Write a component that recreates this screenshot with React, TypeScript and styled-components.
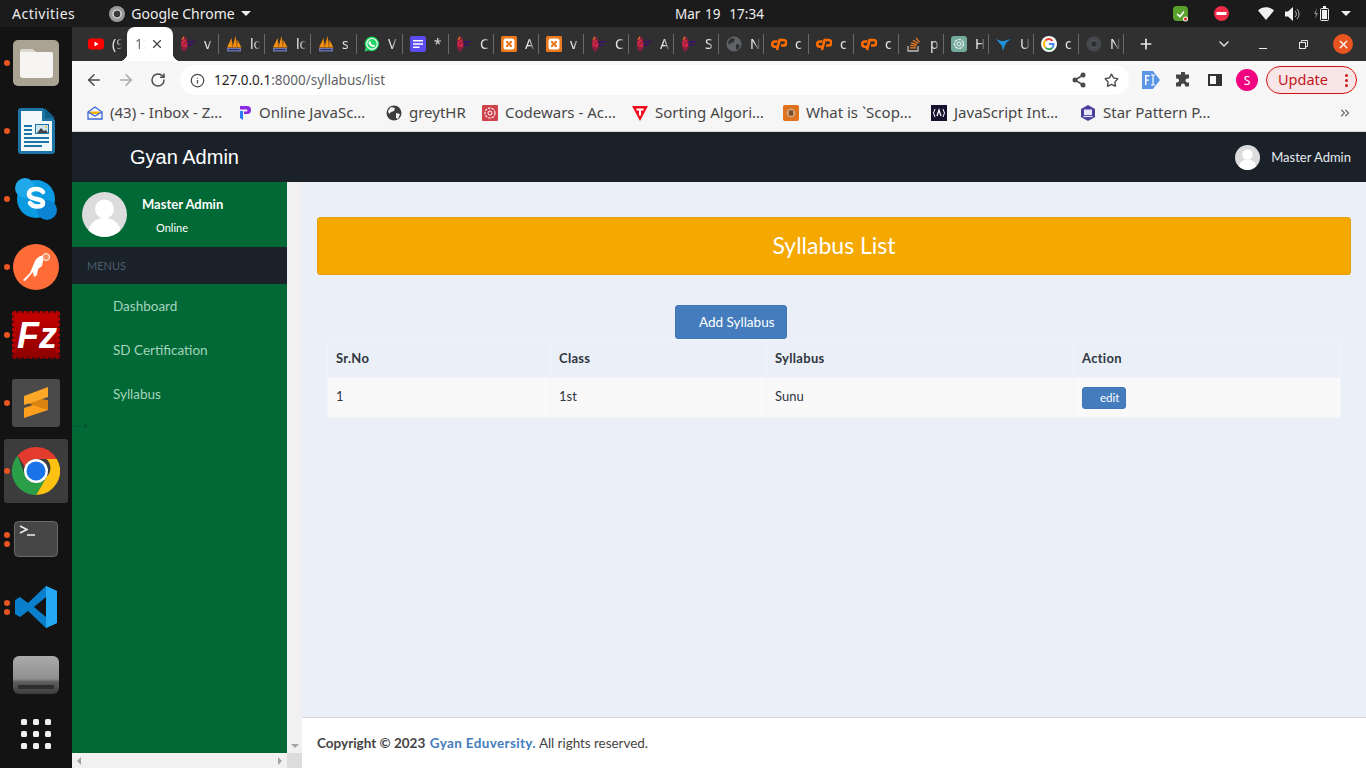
import React from 'react';
import styled, { createGlobalStyle } from 'styled-components';
import {
  ArrowLeft,
  ArrowRight,
  ChevronDown,
  ChevronsRight,
  Info,
  Plus,
  RotateCw,
  Star,
  X,
} from 'lucide-react';

const GlobalStyle = createGlobalStyle`
  html, body {
    margin: 0;
    padding: 0;
    height: 100%;
    overflow: hidden;
    background: #131313;
  }
  * { box-sizing: border-box; }
`;

const uiFont = `"Noto Sans", "Open Sans", sans-serif`;
const pageFont = `Lato, "Noto Sans", sans-serif`;

const Screen = styled.div`
  width: 1366px;
  height: 768px;
  display: flex;
  flex-direction: column;
  overflow: hidden;
  font-family: ${uiFont};
`;

/* ---------- gnome top bar ---------- */
const TopBar = styled.div`
  height: 27px;
  flex: none;
  display: grid;
  grid-template-columns: 675px auto 1fr;
  align-items: center;
  background: #1b1b1b;
  color: #eeeeee;
  font-size: 14px;
`;

const TopLeft = styled.div`
  display: flex;
  align-items: center;
  padding-left: 12px;
`;

const Activities = styled.span`
  letter-spacing: 0.5px;
`;

const AppMenu = styled.div`
  display: flex;
  align-items: center;
  gap: 6px;
  margin-left: 34px;
`;

const Clock = styled.div`
  font-size: 13.5px;
  word-spacing: 1px;
`;

const TopRight = styled.div`
  display: flex;
  align-items: center;
  justify-content: flex-end;
  padding-right: 15px;
`;

const Tray = styled.span<{ $gap?: number }>`
  display: flex;
  align-items: center;
  margin-right: ${(p) => p.$gap ?? 0}px;
`;

const Caret = styled.span`
  width: 0;
  height: 0;
  border-left: 5px solid transparent;
  border-right: 5px solid transparent;
  border-top: 5px solid #eeeeee;
`;

/* ---------- desktop ---------- */
const Desktop = styled.div`
  flex: 1;
  min-height: 0;
  display: flex;
`;

const Dock = styled.nav`
  width: 72px;
  flex: none;
  display: flex;
  flex-direction: column;
  padding-top: 2px;
  background: #131313;
`;

const DockCell = styled.div<{ $active?: boolean; $short?: boolean }>`
  position: relative;
  height: ${(p) => (p.$short ? 50 : 68)}px;
  flex: none;
  display: flex;
  align-items: center;
  justify-content: center;

  &::before {
    content: '';
    display: ${(p) => (p.$active ? 'block' : 'none')};
    position: absolute;
    inset: 2px 4px;
    border-radius: 3px;
    background: #3c3c3c;
  }
  svg {
    position: relative;
  }
`;

const Dots = styled.span`
  position: absolute;
  left: 4px;
  top: 0;
  bottom: 0;
  display: flex;
  flex-direction: column;
  justify-content: center;
  gap: 3px;
  z-index: 1;
`;

const Dot = styled.i`
  display: block;
  width: 6px;
  height: 6px;
  border-radius: 50%;
  background: #e95420;
`;

const Browser = styled.div`
  flex: 1;
  min-width: 0;
  display: flex;
  flex-direction: column;
`;

/* ---------- tab strip ---------- */
const TabStrip = styled.div`
  height: 34px;
  flex: none;
  display: flex;
  align-items: stretch;
  padding-left: 9px;
  background: #303030;
  color: #e8e8e8;
  font-size: 14px;
`;

const Tab = styled.div<{ $w: number; $active?: boolean }>`
  position: relative;
  width: ${(p) => p.$w}px;
  flex: none;
  display: flex;
  align-items: center;
  padding-left: ${(p) => (p.$active ? 8 : 7)}px;
  gap: 8px;
  background: ${(p) => (p.$active ? '#ffffff' : 'transparent')};
  color: ${(p) => (p.$active ? '#5f6368' : '#e8e8e8')};
  border-radius: ${(p) => (p.$active ? '8px 8px 0 0' : '0')};

  svg {
    flex: none;
  }

  ${(p) =>
    p.$active
      ? `
    &::before, &::after {
      content: '';
      position: absolute;
      bottom: 0;
      width: 8px;
      height: 8px;
    }
    &::before {
      left: -8px;
      background: radial-gradient(circle at 0 0, transparent 8px, #ffffff 8.5px);
    }
    &::after {
      right: -8px;
      background: radial-gradient(circle at 100% 0, transparent 8px, #ffffff 8.5px);
    }
  `
      : ''}
`;

const TabSep = styled.i`
  position: absolute;
  right: 0;
  top: 7px;
  bottom: 7px;
  width: 1px;
  background: #6a6a6a;
`;

const TabTitle = styled.span`
  width: 11px;
  flex: none;
  white-space: nowrap;
  padding-bottom: 1px;
  mask-image: linear-gradient(to right, #000 35%, transparent 95%);
`;

const TabClose = styled.span`
  position: absolute;
  right: 9px;
  top: 10px;
  display: flex;
  color: #3c4043;
`;

const StripActions = styled.div`
  flex: 1;
  display: flex;
  align-items: center;
  color: #e8e8e8;
`;

const StripButton = styled.span<{ $left: number }>`
  display: flex;
  margin-left: ${(p) => p.$left}px;
`;

const MinimizeBar = styled.span`
  display: block;
  width: 8px;
  height: 1px;
  margin: 8px 0 0 27px;
  background: #e8e8e8;
`;

const CloseCircle = styled.span`
  width: 20px;
  height: 20px;
  border-radius: 50%;
  display: flex;
  align-items: center;
  justify-content: center;
  background: #e95420;
  color: #ffffff;
  margin-left: 25px;
`;

/* ---------- toolbar ---------- */
const Toolbar = styled.div`
  height: 34px;
  flex: none;
  display: flex;
  align-items: flex-end;
  background: #f7f7f7;
  color: #5f6368;
`;

const NavButton = styled.span<{ $left: number; $muted?: boolean }>`
  height: 30px;
  display: flex;
  align-items: center;
  margin-left: ${(p) => p.$left}px;
  color: ${(p) => (p.$muted ? '#a9a9a9' : '#4a4a4a')};
`;

const Omnibox = styled.div`
  width: 949px;
  height: 30px;
  flex: none;
  margin-left: 14px;
  padding: 0 10px 0 10px;
  display: flex;
  align-items: center;
  border-radius: 15px;
  background: #ffffff;
  font-size: 13.5px;
  color: #5f6368;
`;

const UrlText = styled.span`
  margin-left: 9px;
  padding-bottom: 1px;
`;

const UrlHost = styled.span`
  color: #1f1f1f;
`;

const OmniIcons = styled.span`
  margin-left: auto;
  display: flex;
  align-items: center;
  gap: 18px;
  color: #4a4a4a;
`;

const ToolIcons = styled.div`
  height: 30px;
  display: flex;
  align-items: center;
  margin-left: 13px;
`;

const Avatar = styled.span`
  width: 22px;
  height: 22px;
  margin-left: 14px;
  border-radius: 50%;
  display: flex;
  align-items: center;
  justify-content: center;
  background: #f0047f;
  color: #fff;
  font-size: 12px;
`;

const UpdatePill = styled.span`
  width: 91px;
  height: 28px;
  margin-left: 8px;
  padding: 0 8px 2px 11px;
  display: flex;
  align-items: center;
  justify-content: space-between;
  border: 1px solid #d50f0f;
  border-radius: 14px;
  background: #f7e6e5;
  color: #c5161d;
  font-size: 14.5px;
`;

const KebabDots = styled.span`
  display: flex;
  flex-direction: column;
  gap: 2px;
  margin-top: 2px;

  i {
    display: block;
    width: 3px;
    height: 3px;
    border-radius: 50%;
    background: #c5161d;
  }
`;

/* ---------- bookmarks ---------- */
const BookmarkBar = styled.div`
  height: 37px;
  flex: none;
  display: flex;
  align-items: center;
  padding: 0 14px 0 15px;
  background: #f6f6f6;
  border-bottom: 1px solid #d8d8d8;
  color: #474747;
  font-size: 15px;
`;

const Bookmark = styled.div<{ $w: number }>`
  width: ${(p) => p.$w}px;
  flex: none;
  display: flex;
  align-items: center;
  gap: 7px;
  white-space: nowrap;
`;

const BookmarkLabel = styled.span`
  padding-bottom: 2px;
`;

const BookmarkMore = styled.span`
  margin-left: auto;
  display: flex;
  color: #5f6368;
`;

/* ---------- admin page ---------- */
const AdminPage = styled.div`
  flex: 1;
  min-height: 0;
  display: flex;
  flex-direction: column;
  font-family: ${pageFont};
`;

const AdminHeader = styled.header`
  height: 50px;
  flex: none;
  display: flex;
  align-items: center;
  justify-content: space-between;
  padding: 0 15px 0 58px;
  background: #1a2129;
  color: #ffffff;
`;

const Brand = styled.div`
  font-family: 'Liberation Sans', Arial, sans-serif;
  font-size: 20px;
`;

const HeaderUser = styled.div`
  display: flex;
  align-items: center;
  gap: 11px;
  font-size: 13px;
  color: #e6e9ee;
`;

const AdminBody = styled.div`
  flex: 1;
  min-height: 0;
  display: flex;
`;

const SideColumn = styled.div`
  width: 230px;
  flex: none;
  display: grid;
  grid-template-columns: 215px 15px;
  grid-template-rows: 1fr 15px;
`;

const Sidebar = styled.aside`
  background: #006935;
  overflow: hidden;
`;

const Profile = styled.div`
  height: 65px;
  display: flex;
  padding: 10px 0 0 10px;
`;

const ProfileText = styled.div`
  margin-left: 15px;
  color: #ffffff;
`;

const ProfileName = styled.div`
  font-size: 13px;
  font-weight: 700;
  line-height: 16px;
  margin-top: 4px;
`;

const ProfileStatus = styled.div`
  font-size: 11px;
  line-height: 14px;
  margin: 9px 0 0 14px;
`;

const MenuLabel = styled.div`
  height: 37px;
  display: flex;
  align-items: center;
  padding-left: 15px;
  background: #1a2129;
  color: #4b5f6e;
  font-size: 11px;
`;

const MenuItem = styled.div`
  height: 44px;
  display: flex;
  align-items: center;
  padding-left: 41px;
  color: #a5d3bd;
  font-size: 13.5px;
`;

const StrayText = styled.div`
  font-size: 11px;
  line-height: 12px;
  margin-top: 4px;
  padding-left: 2px;
  color: #0b4a2c;
`;

const ScrollTrack = styled.div<{ $horizontal?: boolean }>`
  display: flex;
  flex-direction: ${(p) => (p.$horizontal ? 'row' : 'column')};
  align-items: center;
  justify-content: flex-end;
  background: #f1f1f1;
  ${(p) => (p.$horizontal ? 'justify-content: space-between; padding: 0 5px;' : 'padding-bottom: 5px;')}
`;

const ScrollCorner = styled.div`
  background: #dcdcdc;
`;

const ScrollArrow = styled.i<{ $dir: 'left' | 'right' | 'down' }>`
  display: block;
  width: 0;
  height: 0;
  ${(p) =>
    p.$dir === 'down'
      ? 'border-left: 4px solid transparent; border-right: 4px solid transparent; border-top: 4px solid #a3a3a3;'
      : p.$dir === 'left'
        ? 'border-top: 4px solid transparent; border-bottom: 4px solid transparent; border-right: 4px solid #a3a3a3;'
        : 'border-top: 4px solid transparent; border-bottom: 4px solid transparent; border-left: 4px solid #a3a3a3;'}
`;

const ContentColumn = styled.main`
  flex: 1;
  min-width: 0;
  display: flex;
  flex-direction: column;
  background: #ebeff7;
`;

const Content = styled.div`
  flex: 1;
  padding: 35px 15px 0;
`;

const TitleBanner = styled.div`
  height: 58px;
  display: flex;
  align-items: center;
  justify-content: center;
  padding-bottom: 2px;
  background: #f4a800;
  border: 1px solid #e59f0a;
  border-radius: 3px;
  color: #ffffff;
  font-size: 23px;
`;

const AddButton = styled.button`
  display: block;
  width: 112px;
  height: 34px;
  margin: 30px 0 0 358px;
  padding: 0 0 0 23px;
  border: 1px solid #3f76b7;
  border-radius: 3px;
  background: #447cbd;
  color: #ffffff;
  text-align: left;
  font-family: inherit;
  font-size: 13.5px;
`;

const TableWrap = styled.div`
  padding: 0 10px;
`;

const DataTable = styled.table`
  width: 100%;
  table-layout: fixed;
  border-collapse: collapse;
  color: #2f3640;
  font-size: 13px;
`;

const HeadCell = styled.th<{ $w?: number }>`
  width: ${(p) => (p.$w ? `${p.$w}px` : 'auto')};
  height: 38px;
  padding: 0 8px 2px;
  border: 1px solid #f0f3f8;
  text-align: left;
  font-weight: 700;
  letter-spacing: 0.3px;
`;

const BodyRow = styled.tr`
  background: #f9f9f9;
`;

const BodyCell = styled.td`
  height: 40px;
  padding: 0 8px 3px;
  border: 1px solid #f0f3f8;
`;

const EditButton = styled.button`
  display: block;
  width: 44px;
  height: 22px;
  margin-top: 3px;
  padding: 0 5px 0 17px;
  border: 1px solid #3f76b7;
  border-radius: 3px;
  background: #447cbd;
  color: #ffffff;
  font-family: inherit;
  font-size: 11.5px;
  text-align: left;
`;

const Footer = styled.footer`
  height: 51px;
  flex: none;
  display: flex;
  align-items: center;
  padding-left: 15px;
  border-top: 1px solid #d2d6de;
  background: #ffffff;
  color: #444444;
  font-size: 13.5px;
`;

const FooterStrong = styled.strong`
  font-weight: 700;
  white-space: pre;
  margin-right: -2px;
`;

const FooterLink = styled.a`
  color: #447cbd;
  font-weight: 700;
  letter-spacing: 0.35px;
  margin-right: 3px;
`;

const FooterRest = styled.span`
  letter-spacing: -0.05px;
`;

/* ---------- drawn icons ---------- */
const PersonAvatar = ({ size }: { size: number }) => (
  <svg width={size} height={size} viewBox="0 0 45 45">
    <defs>
      <clipPath id={`avatar-${size}`}>
        <circle cx="22.5" cy="22.5" r="22.5" />
      </clipPath>
    </defs>
    <g clipPath={`url(#avatar-${size})`}>
      <rect width="45" height="45" fill="#dcdcdc" />
      <circle cx="22.5" cy="17" r="9.5" fill="#fff" />
      <ellipse cx="22.5" cy="40" rx="16" ry="14" fill="#fff" />
    </g>
  </svg>
);

const FolderIcon = () => (
  <svg width="46" height="46" viewBox="0 0 46 46">
    <rect width="46" height="46" rx="5" fill="#aaa393" />
    <path d="M7 12a3 3 0 0 1 3-3h9l4 3h15a2 2 0 0 1 2 2v21a3 3 0 0 1-3 3H10a3 3 0 0 1-3-3z" fill="#f6f5f3" />
    <path d="M7 12a3 3 0 0 1 3-3h9l4 3z" fill="#d9d6cf" />
  </svg>
);

const WriterIcon = () => (
  <svg width="37" height="46" viewBox="0 0 37 46">
    <path d="M3 0h22l12 12v31a3 3 0 0 1-3 3H3a3 3 0 0 1-3-3V3a3 3 0 0 1 3-3z" fill="#1c75a6" />
    <path d="M3 3h21v10h10v30H3z" fill="#f3f8fb" />
    <path d="M27 0l10 10H27z" fill="#125e88" />
    <path d="M6 17h8v2H6zm0 4h8v2H6zm0 4h8v2H6zm0 4h25v2H6zm0 4h25v2H6zm0 4h18v2H6z" fill="#1c75a6" />
    <rect x="17" y="16" width="14" height="10" fill="#1c75a6" />
    <rect x="18" y="17" width="12" height="8" fill="#cfe3ef" />
    <path d="M19 25l4-5 3 3 2-1 2 3z" fill="#444" />
    <circle cx="28" cy="19" r="1" fill="#f4c430" />
  </svg>
);

const SkypeIcon = () => (
  <svg width="42" height="42" viewBox="0 0 42 42">
    <circle cx="21" cy="21" r="19" fill="#0a9be3" />
    <circle cx="10" cy="10" r="10" fill="#1fa8ea" />
    <circle cx="32" cy="32" r="10" fill="#0a84d3" />
    <path d="M28 14c-1.500-2-4-3-7-3-4.500 0-7 2-7 5 0 6.500 14 3.500 14 9 0 2.200-2.500 3.500-6 3.500-3.300 0-5.500-1.200-7-3.500" fill="none" stroke="#fff" strokeWidth="4.500" strokeLinecap="round" />
  </svg>
);

const PostmanIcon = () => (
  <svg width="46" height="46" viewBox="0 0 46 46">
    <circle cx="23" cy="23" r="23" fill="#ff6c37" />
    <path d="M10 36l7-7 5-12c2-4 6-6 9-5l-2 10-4 3-1 6-3 2-1-5-8 9z" fill="#fff" />
    <circle cx="33" cy="13" r="3.500" fill="#ff8e5f" stroke="#fff" strokeWidth="1" />
  </svg>
);

const scallop = Array.from({ length: 9 }).flatMap((_, i) => {
  const at = i * 5.25 + 3;
  return [
    [at, 2],
    [at, 46],
    [2, at],
    [46, at],
  ];
});

const FileZillaIcon = () => (
  <svg width="48" height="48" viewBox="0 0 48 48">
    <defs>
      <linearGradient id="fz-shade" x1="0" y1="0" x2="0" y2="1">
        <stop offset="0" stopColor="#c40000" />
        <stop offset="1" stopColor="#8f0000" />
      </linearGradient>
    </defs>
    <rect x="2" y="2" width="44" height="44" fill="url(#fz-shade)" />
    {scallop.map(([cx, cy], i) => (
      <circle key={i} cx={cx} cy={cy} r="2.200" fill={cy > 40 ? '#8f0000' : '#b80000'} />
    ))}
    <text x="5" y="37" fontFamily="'Liberation Sans', sans-serif" fontStyle="italic" fontWeight="700" fontSize="36" fill="#fff">
      Fz
    </text>
  </svg>
);

const SublimeIcon = () => (
  <svg width="48" height="48" viewBox="0 0 48 48">
    <rect width="48" height="48" rx="3" fill="#4a4a4a" />
    <path d="M12 29l24-8v10l-24 8z" fill="#ff9f1c" />
    <path d="M12 23l24 8V21l-14-2z" fill="#d98412" />
    <path d="M12 17l24-9v10l-24 8z" fill="#ffa726" />
  </svg>
);

const ChromeIcon = () => (
  <svg width="48" height="48" viewBox="0 0 48 48">
    <path d="M24 0a24 24 0 0 1 20.800 12H24a12 12 0 0 0-11.200 7.700L5.600 8.500A24 24 0 0 1 24 0z" fill="#e33b2e" />
    <path d="M44.800 12A24 24 0 0 1 24 48l10.400-18a12 12 0 0 0 0-18z" fill="#fcc111" />
    <path d="M24 48A24 24 0 0 1 5.600 8.500L13.600 30a12 12 0 0 0 10.400 6l10.400-6z" fill="#2b9f48" />
    <circle cx="24" cy="24" r="12" fill="#fff" />
    <circle cx="24" cy="24" r="9.500" fill="#1a73e8" />
  </svg>
);

const TerminalIcon = () => (
  <svg width="44" height="36" viewBox="0 0 44 36">
    <rect x=".5" y=".5" width="43" height="35" rx="4" fill="#464646" stroke="#6b6b6b" />
    <path d="M6 5l7 3.500-7 3.500" fill="none" stroke="#f0f0f0" strokeWidth="1.500" />
    <path d="M13 14h8" stroke="#f0f0f0" strokeWidth="1.500" />
  </svg>
);

const VSCodeIcon = () => (
  <svg width="42" height="42" viewBox="0 0 42 42">
    <path d="M31 0l11 5v32l-11 5-18-17-8 6-5-3V14l5-3 8 6z" fill="#0a7fcb" />
    <path d="M31 0l11 5v32l-11 5z" fill="#25a9f2" />
    <path d="M31 11L19 21l12 10z" fill="#131313" />
  </svg>
);

const DriveIcon = () => (
  <svg width="46" height="38" viewBox="0 0 46 38">
    <defs>
      <linearGradient id="drive-shade" x1="0" y1="0" x2="0" y2="1">
        <stop offset="0" stopColor="#ababab" />
        <stop offset=".6" stopColor="#8f8f8f" />
        <stop offset=".68" stopColor="#5e5e5e" />
        <stop offset="1" stopColor="#3d3d3d" />
      </linearGradient>
    </defs>
    <rect width="46" height="38" rx="6" fill="url(#drive-shade)" />
    <rect x="5" y="29" width="36" height="4" fill="#2d2d2d" />
  </svg>
);

const AppGrid = () => (
  <svg width="32" height="32" viewBox="0 0 32 32" fill="#f0f0f0">
    {[0, 1, 2].map((row) =>
      [0, 1, 2].map((col) => (
        <rect key={`${row}-${col}`} x={col * 12 + 1} y={row * 12 + 1} width="6" height="6" rx="1.500" />
      )),
    )}
  </svg>
);

const dockApps = [
  { icon: <FolderIcon />, dots: 1 },
  { icon: <WriterIcon />, dots: 1 },
  { icon: <SkypeIcon />, dots: 1 },
  { icon: <PostmanIcon />, dots: 1 },
  { icon: <FileZillaIcon />, dots: 1 },
  { icon: <SublimeIcon />, dots: 1 },
  { icon: <ChromeIcon />, dots: 1, active: true },
  { icon: <TerminalIcon />, dots: 2 },
  { icon: <VSCodeIcon />, dots: 2 },
  { icon: <DriveIcon />, dots: 0 },
];

const YoutubeFav = () => (
  <svg width="16" height="16" viewBox="0 0 16 16">
    <rect y="2.500" width="16" height="11" rx="3" fill="#f00" />
    <path d="M6.500 5.500l4 2.500-4 2.500z" fill="#fff" />
  </svg>
);

const GemFav = () => (
  <svg width="16" height="16" viewBox="0 0 16 16">
    <path d="M3.500 0l3 2 1 3v7l-3.500 4-3-4V4z" fill="#8a1f3c" />
    <path d="M6 5.500a2.500 2.500 0 1 0 .5 4V8H4.500" fill="none" stroke="#e0294a" strokeWidth="1.400" />
    <path d="M1.500 4L3.500 0l1 3z" fill="#d9702a" />
    <path d="M7.500 5H15v2H7.500zM7.500 8H12v2H7.500z" fill="#3a1560" />
  </svg>
);

const PmaFav = () => (
  <svg width="16" height="16" viewBox="0 0 16 16">
    <path d="M1 11.500L5.500 2 7 11.500zM6.500 11.500L9.500 0l2 11.500zM11 11.500L11.500 4l4 7.500z" fill="#f29111" />
    <path d="M5.500 2L7 11.500H6zM9.500 0l2 11.500h-1z" fill="#a9590f" />
    <rect x="1" y="12" width="14" height="3.500" fill="#6c78af" />
    <path d="M2.500 13h11v1.200h-11z" fill="#2c3367" />
  </svg>
);

const WhatsappFav = () => (
  <svg width="16" height="16" viewBox="0 0 16 16">
    <path d="M8 .5a7.300 7.300 0 0 0-6.300 11L.5 15.500l4.100-1.100A7.300 7.300 0 1 0 8 .5z" fill="#25d366" />
    <circle cx="8" cy="7.800" r="5.300" fill="none" stroke="#fff" strokeWidth="1.100" />
    <path d="M5.700 5c.8-.5 1.300 1.500 1 2 .5 1 1.200 1.700 2.300 2.200.6-.6 2 .2 2 .8-.5 1-2 1.200-3.500.5-1.500-.7-2.500-2-3-3.200-.2-1 .4-1.900 1.200-2.300z" fill="#fff" />
  </svg>
);

const DocFav = () => (
  <svg width="16" height="16" viewBox="0 0 16 16">
    <rect width="16" height="16" rx="2" fill="#5b4cf0" />
    <path d="M3 4h10v1.500H3zm0 3.300h10v1.500H3zm0 3.300h6.500v1.500H3z" fill="#fff" />
  </svg>
);

const XamppFav = () => (
  <svg width="16" height="16" viewBox="0 0 16 16">
    <rect width="16" height="16" rx="1.500" fill="#ea7a1c" />
    <rect x="2.500" y="2.500" width="11" height="11" rx="2.500" fill="#fff" />
    <path d="M5 5h2l1 2 1-2h2v1.500L9.500 8 11 9.500V11H9L8 9l-1 2H5V9.500L6.500 8 5 6.500z" fill="#ea7a1c" />
  </svg>
);

const GlobeFav = ({ fill, land }: { fill: string; land: string }) => (
  <svg width="16" height="16" viewBox="0 0 16 16">
    <circle cx="8" cy="8" r="7.500" fill={fill} />
    <path d="M5 2l4 1-1 3-3 1-2 2-1-3zM10 8l4 1-2 5-2-1z" fill={land} />
  </svg>
);

const CpanelFav = () => (
  <svg width="16" height="16" viewBox="0 0 16 16" fill="none" stroke="#ff6c00" strokeWidth="2.600">
    <path d="M6.500 5.500H3.800a2.600 2.600 0 0 0 0 5.200H6" />
    <path d="M6 14l2.600-10H12.500a2.500 2.500 0 0 1 0 5.500H10" />
  </svg>
);

const StackFav = () => (
  <svg width="16" height="16" viewBox="0 0 16 16">
    <path d="M2 10v5h10v-5" fill="none" stroke="#bcbbbb" strokeWidth="1.300" />
    <path d="M4 12.500h6v-1.200H4zM4.300 10l6 .6.100-1.200-6-.6zM5 7.500l5.600 1.700.4-1.100-5.600-1.800zM6.700 4.800l5 3 .6-1-5-3zM9.500 2.300l3.500 4.500 1-.8L10.500 1.500z" fill="#f48024" />
  </svg>
);

const GptFav = () => (
  <svg width="16" height="16" viewBox="0 0 16 16">
    <rect width="16" height="16" rx="3" fill="#74aa9c" />
    <circle cx="8" cy="8" r="4.500" fill="none" stroke="#f3f3f3" strokeWidth="1.200" strokeDasharray="3 1" />
    <circle cx="8" cy="8" r="2" fill="none" stroke="#f3f3f3" strokeWidth="1" />
  </svg>
);

const BirdFav = () => (
  <svg width="16" height="16" viewBox="0 0 16 16">
    <path d="M0 3l5 2 3 0 7-2-4 3-2 3-2 6-1-5L0 3z" fill="#1f92d8" />
  </svg>
);

const GoogleFav = () => (
  <svg width="16" height="16" viewBox="0 0 16 16">
    <circle cx="8" cy="8" r="8" fill="#fff" />
    <g fill="none" strokeWidth="2">
      <path d="M11.500 5a4.500 4.500 0 0 0-7-.5" stroke="#ea4335" />
      <path d="M4.500 4.500a4.500 4.500 0 0 0 0 7" stroke="#fbbc05" />
      <path d="M4.500 11.500a4.500 4.500 0 0 0 7 .2" stroke="#34a853" />
      <path d="M11.500 11.700A4.500 4.500 0 0 0 12.500 8H8" stroke="#4285f4" />
    </g>
  </svg>
);

const ChromeDimFav = () => (
  <svg width="16" height="16" viewBox="0 0 16 16">
    <circle cx="8" cy="8" r="7.500" fill="#45484c" />
    <circle cx="8" cy="8" r="3.500" fill="#303030" stroke="#5a5d61" strokeWidth="1" />
  </svg>
);

const InboxFav = () => (
  <svg width="16" height="16" viewBox="0 0 16 16" fill="none">
    <path d="M1 7l7-5 7 5v7H1z" stroke="#3a67d8" strokeWidth="1.300" />
    <path d="M3 6.500h10v2.500H3z" fill="#f5b400" />
    <path d="M1 7l7 4 7-4" stroke="#3a67d8" strokeWidth="1.300" />
  </svg>
);

const ProgramizFav = () => (
  <svg width="16" height="16" viewBox="0 0 16 16">
    <path d="M4 1h7a3 3 0 0 1 0 8H8v-2.500h2.500a1 1 0 0 0 0-2H4z" fill="#8a2be2" />
    <path d="M4 6h3v9l-3-2z" fill="#2f7df6" />
  </svg>
);

const GlobeDark = () => <GlobeFav fill="#3d3d3d" land="#f6f6f6" />;

const CodewarsFav = () => (
  <svg width="16" height="16" viewBox="0 0 16 16">
    <rect width="16" height="16" rx="1" fill="#d0434c" />
    <circle cx="8" cy="8" r="5" fill="none" stroke="#fff" strokeWidth="1.100" strokeDasharray="2.500 1" />
    <circle cx="8" cy="8" r="2" fill="none" stroke="#fff" strokeWidth="1" />
  </svg>
);

const TriangleFav = () => (
  <svg width="16" height="16" viewBox="0 0 16 16">
    <path d="M0 1h16L8 16z" fill="#f01020" />
    <path d="M4.500 3.500h7v2H9v5H7v-5H4.500z" fill="#fff" />
  </svg>
);

const ScopeFav = () => (
  <svg width="16" height="16" viewBox="0 0 16 16">
    <rect width="16" height="16" rx="2" fill="#e2711d" />
    <circle cx="8" cy="8" r="4.500" fill="#c9a27a" />
    <rect x="6" y="5.500" width="4" height="5" fill="#7a4a22" />
  </svg>
);

const JsFav = () => (
  <svg width="16" height="16" viewBox="0 0 16 16">
    <rect width="16" height="16" fill="#17102e" />
    <path d="M4 4L2.500 8 4 12M12 4l1.500 4L12 12" fill="none" stroke="#fff" strokeWidth="1" />
    <path d="M6 11l2-6 2 6" fill="none" stroke="#fff" strokeWidth="1.300" />
  </svg>
);

const StarFav = () => (
  <svg width="16" height="16" viewBox="0 0 16 16">
    <path d="M8 0l7 4v8l-7 4-7-4V4z" fill="#4b3f9e" />
    <rect x="4" y="4.500" width="8" height="5.500" fill="#e9e6fb" />
    <path d="M3.500 11.500h9" stroke="#e9e6fb" strokeWidth="1.200" />
  </svg>
);

const FlutterExt = () => (
  <svg width="18" height="20" viewBox="0 0 18 20">
    <path d="M0 1h11l7 9-7 9H0z" fill="#5a95e6" />
    <path d="M3 5h4.500v1.400H4.500v3H7v1.400H4.500V15H3z" fill="#fff" />
    <path d="M9 5h4M11 5v10M9 15h4" stroke="#fff" strokeWidth="1.200" fill="none" />
  </svg>
);

const ShareFilled = () => (
  <svg width="14" height="16" viewBox="0 0 14 16" fill="#4a4a4a">
    <path d="M11 3L3 8l8 5" fill="none" stroke="#4a4a4a" strokeWidth="1.500" />
    <circle cx="11" cy="3" r="2.500" />
    <circle cx="3" cy="8" r="2.500" />
    <circle cx="11" cy="13" r="2.500" />
  </svg>
);

const PuzzleIcon = () => (
  <svg width="16" height="16" viewBox="0 0 16 16">
    <path d="M6 1.500a2 2 0 0 1 4 0V3h4v4h-1.500a2 2 0 0 0 0 4H14v4h-4v-1a2 2 0 0 0-4 0v1H1v-4h1a2 2 0 0 0 0-4H1V3h5z" fill="#454545" transform="translate(0 -.5)" />
  </svg>
);

const SidePanelIcon = () => (
  <svg width="14" height="12" viewBox="0 0 14 12">
    <rect x="1" y="1" width="12" height="10" fill="none" stroke="#333" strokeWidth="2" />
    <rect x="8" y="1" width="5" height="10" fill="#333" />
  </svg>
);

const ShieldTray = () => (
  <svg width="16" height="16" viewBox="0 0 16 16">
    <rect x="0" y="0" width="15" height="15" rx="4" fill="#5aa02c" />
    <path d="M4 8l3 2.500L11 5.500" fill="none" stroke="#fff" strokeWidth="1.600" />
    <circle cx="12.500" cy="13" r="2.500" fill="#fff" />
    <circle cx="12.500" cy="13" r="1.600" fill="#e02020" />
  </svg>
);

const BlockTray = () => (
  <svg width="15" height="15" viewBox="0 0 15 15">
    <circle cx="7.500" cy="7.500" r="7.500" fill="#ef2b45" />
    <rect x="2.500" y="6" width="10" height="3" fill="#fff" />
  </svg>
);

const WifiTray = () => (
  <svg width="16" height="13" viewBox="0 0 16 13">
    <path d="M8 13L0 3.500C4.500-.8 11.500-.8 16 3.500z" fill="#f2f2f2" />
  </svg>
);

const VolumeTray = () => (
  <svg width="15" height="14" viewBox="0 0 15 14">
    <path d="M0 4.500h3L8 0v14l-5-4.500H0z" fill="#f2f2f2" />
    <path d="M10 4a4 4 0 0 1 0 6M12 2a7 7 0 0 1 0 10" fill="none" stroke="#b5b5b5" strokeWidth="1" />
  </svg>
);

const BatteryTray = () => (
  <svg width="15" height="15" viewBox="0 0 15 15">
    <path d="M3 2L0 8h2l-1 5 3-6H2l1-5z" fill="#8a8a8a" />
    <rect x="6.500" y="2.500" width="8" height="12" rx="1" fill="#222" stroke="#f2f2f2" />
    <rect x="9" y="0" width="3" height="2" fill="#f2f2f2" />
    <rect x="8" y="4" width="5" height="9" fill="#f2f2f2" />
  </svg>
);

const ChromeGrey = () => (
  <svg width="16" height="16" viewBox="0 0 16 16">
    <circle cx="8" cy="8" r="8" fill="#9a9a9a" />
    <circle cx="8" cy="8" r="4" fill="#3b3b3b" stroke="#eaeaea" strokeWidth="1.200" />
  </svg>
);

const RestoreIcon = () => (
  <svg width="9" height="9" viewBox="0 0 9 9" fill="none" stroke="#e8e8e8" strokeWidth="1">
    <rect x=".5" y="2.500" width="6" height="6" />
    <path d="M2.500 2.500v-2h6v6h-2" />
  </svg>
);

const g = <GemFav />;
const pma = <PmaFav />;
const xampp = <XamppFav />;
const cp = <CpanelFav />;

const tabs: { icon?: React.ReactNode; title: string; active?: boolean }[] = [
  { icon: <YoutubeFav />, title: '(9' },
  { title: '12', active: true },
  { icon: g, title: 'v' },
  { icon: pma, title: 'lo' },
  { icon: pma, title: 'lo' },
  { icon: pma, title: 's' },
  { icon: <WhatsappFav />, title: 'V' },
  { icon: <DocFav />, title: '*' },
  { icon: g, title: 'C' },
  { icon: xampp, title: 'A' },
  { icon: xampp, title: 'v' },
  { icon: g, title: 'C' },
  { icon: g, title: 'A' },
  { icon: g, title: 'S' },
  { icon: <GlobeFav fill="#5f6368" land="#303030" />, title: 'N' },
  { icon: cp, title: 'c' },
  { icon: cp, title: 'c' },
  { icon: cp, title: 'c' },
  { icon: <StackFav />, title: 'p' },
  { icon: <GptFav />, title: 'H' },
  { icon: <BirdFav />, title: 'U' },
  { icon: <GoogleFav />, title: 'c' },
  { icon: <ChromeDimFav />, title: 'N' },
];

const bookmarks = [
  { icon: <InboxFav />, title: '(43) - Inbox - Z…', w: 149 },
  { icon: <ProgramizFav />, title: 'Online JavaSc…', w: 150 },
  { icon: <GlobeDark />, title: 'greytHR', w: 96 },
  { icon: <CodewarsFav />, title: 'Codewars - Ac…', w: 150 },
  { icon: <TriangleFav />, title: 'Sorting Algori…', w: 151 },
  { icon: <ScopeFav />, title: 'What is `Scop…', w: 148 },
  { icon: <JsFav />, title: 'JavaScript Int…', w: 149 },
  { icon: <StarFav />, title: 'Star Pattern P…', w: 140 },
];

const App = () => (
  <Screen>
    <GlobalStyle />
    <TopBar>
      <TopLeft>
        <Activities>Activities</Activities>
        <AppMenu>
          <ChromeGrey />
          Google Chrome
          <Caret />
        </AppMenu>
      </TopLeft>
      <Clock>Mar 19&nbsp; 17:34</Clock>
      <TopRight>
        <Tray $gap={25}>
          <ShieldTray />
        </Tray>
        <Tray $gap={29}>
          <BlockTray />
        </Tray>
        <Tray $gap={11}>
          <WifiTray />
        </Tray>
        <Tray $gap={14}>
          <VolumeTray />
        </Tray>
        <Tray $gap={12}>
          <BatteryTray />
        </Tray>
        <Caret />
      </TopRight>
    </TopBar>

    <Desktop>
      <Dock>
        {dockApps.map((app, index) => (
          <DockCell key={index} $active={app.active}>
            {app.dots > 0 && (
              <Dots>
                {Array.from({ length: app.dots }).map((_, i) => (
                  <Dot key={i} />
                ))}
              </Dots>
            )}
            {app.icon}
          </DockCell>
        ))}
        <DockCell $short>
          <AppGrid />
        </DockCell>
      </Dock>

      <Browser>
        <TabStrip>
          {tabs.map((tab, index) => (
            <Tab key={index} $w={index < 8 ? 46 : 45} $active={tab.active}>
              {tab.icon}
              <TabTitle>{tab.title}</TabTitle>
              {tab.active && (
                <TabClose>
                  <X size={14} />
                </TabClose>
              )}
              {index > 1 && <TabSep />}
            </Tab>
          ))}
          <StripActions>
            <StripButton $left={14}>
              <Plus size={16} strokeWidth={2.5} />
            </StripButton>
            <StripButton $left={62}>
              <ChevronDown size={16} />
            </StripButton>
            <MinimizeBar />
            <StripButton $left={32}>
              <RestoreIcon />
            </StripButton>
            <CloseCircle>
              <X size={13} strokeWidth={2.5} />
            </CloseCircle>
          </StripActions>
        </TabStrip>

        <Toolbar>
          <NavButton $left={13}>
            <ArrowLeft size={18} strokeWidth={2} />
          </NavButton>
          <NavButton $left={14} $muted>
            <ArrowRight size={18} strokeWidth={2} />
          </NavButton>
          <NavButton $left={15}>
            <RotateCw size={16} strokeWidth={2.2} />
          </NavButton>
          <Omnibox>
            <Info size={15} color="#4a4a4a" />
            <UrlText>
              <UrlHost>127.0.0.1</UrlHost>:8000/syllabus/list
            </UrlText>
            <OmniIcons>
              <ShareFilled />
              <Star size={15} strokeWidth={2.2} />
            </OmniIcons>
          </Omnibox>
          <ToolIcons>
            <FlutterExt />
            <StripButton $left={15}>
              <PuzzleIcon />
            </StripButton>
            <StripButton $left={17}>
              <SidePanelIcon />
            </StripButton>
            <Avatar>S</Avatar>
            <UpdatePill>
              Update
              <KebabDots>
                <i />
                <i />
                <i />
              </KebabDots>
            </UpdatePill>
          </ToolIcons>
        </Toolbar>

        <BookmarkBar>
          {bookmarks.map((item) => (
            <Bookmark key={item.title} $w={item.w}>
              {item.icon}
              <BookmarkLabel>{item.title}</BookmarkLabel>
            </Bookmark>
          ))}
          <BookmarkMore>
            <ChevronsRight size={14} />
          </BookmarkMore>
        </BookmarkBar>

        <AdminPage>
          <AdminHeader>
            <Brand>Gyan Admin</Brand>
            <HeaderUser>
              <PersonAvatar size={25} />
              Master Admin
            </HeaderUser>
          </AdminHeader>
          <AdminBody>
            <SideColumn>
              <Sidebar>
                <Profile>
                  <PersonAvatar size={45} />
                  <ProfileText>
                    <ProfileName>Master Admin</ProfileName>
                    <ProfileStatus>Online</ProfileStatus>
                  </ProfileText>
                </Profile>
                <MenuLabel>MENUS</MenuLabel>
                <MenuItem>Dashboard</MenuItem>
                <MenuItem>SD Certification</MenuItem>
                <MenuItem>Syllabus</MenuItem>
                <StrayText>--&gt;</StrayText>
              </Sidebar>
              <ScrollTrack>
                <ScrollArrow $dir="down" />
              </ScrollTrack>
              <ScrollTrack $horizontal>
                <ScrollArrow $dir="left" />
                <ScrollArrow $dir="right" />
              </ScrollTrack>
              <ScrollCorner />
            </SideColumn>

            <ContentColumn>
              <Content>
                <TitleBanner>Syllabus List</TitleBanner>
                <AddButton>Add Syllabus</AddButton>
                <TableWrap>
                  <DataTable>
                    <thead>
                      <tr>
                        <HeadCell $w={223}>Sr.No</HeadCell>
                        <HeadCell $w={216}>Class</HeadCell>
                        <HeadCell $w={307}>Syllabus</HeadCell>
                        <HeadCell>Action</HeadCell>
                      </tr>
                    </thead>
                    <tbody>
                      <BodyRow>
                        <BodyCell>1</BodyCell>
                        <BodyCell>1st</BodyCell>
                        <BodyCell>Sunu</BodyCell>
                        <BodyCell>
                          <EditButton>edit</EditButton>
                        </BodyCell>
                      </BodyRow>
                    </tbody>
                  </DataTable>
                </TableWrap>
              </Content>
              <Footer>
                <FooterStrong>Copyright © 2023  </FooterStrong>
                <FooterLink>Gyan Eduversity.</FooterLink>
                <FooterRest>All rights reserved.</FooterRest>
              </Footer>
            </ContentColumn>
          </AdminBody>
        </AdminPage>
      </Browser>
    </Desktop>
  </Screen>
);

export default App;
